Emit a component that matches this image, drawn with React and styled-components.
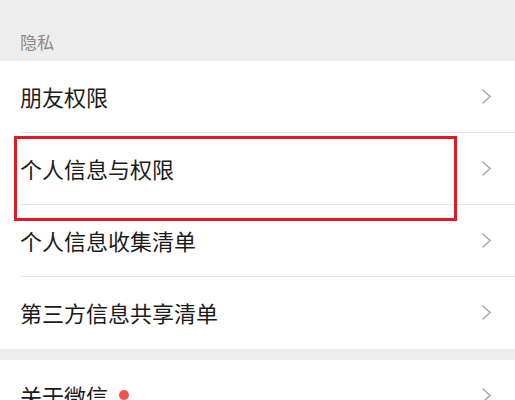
import React from 'react';
import styled, { createGlobalStyle } from 'styled-components';

const GlobalStyle = createGlobalStyle`
    html, body {
        margin:0;
        padding:0;
        background:#ededed;
    }
    body {
        font-family:"Noto Sans CJK SC", "Noto Sans", sans-serif;
        -webkit-font-smoothing:antialiased;
    }
`;

export const Page = styled.div`
    display:flex;
    flex-direction:column;
    width:515px;
    height:400px;
    overflow:hidden;
    background:#ededed;
    & > * {
        flex-shrink:0;
    }
`;

export const SectionTitle = styled.div`
    display:flex;
    align-items:flex-end;
    height:61px;
    box-sizing:border-box;
    padding:0 0 7px 20px;
    font-size:17px;
    line-height:24px;
    color:#8a8a8a;
`;

export const Group = styled.div`
    display:flex;
    flex-direction:column;
    background:#fff;
    margin-top:${p => p.$gap || 0}px;
`;

export const Row = styled.div`
    position:relative;
    display:flex;
    align-items:center;
    flex-shrink:0;
    height:72px;
    padding:0 23px 2px 20px;
    box-sizing:border-box;
    &:after {
        content:'';
        display:${p => (p.$last ? 'none' : 'block')};
        position:absolute;
        left:20px;
        right:0;
        bottom:0;
        height:1px;
        background:#e6e6e6;
    }
`;

export const Label = styled.span`
    font-size:22px;
    line-height:30px;
    color:#1b1b1b;
`;

export const Dot = styled.span`
    width:10px;
    height:10px;
    border-radius:50%;
    background:#f25151;
    margin-left:11px;
`;

export const Spacer = styled.div`
    flex:1;
`;

export const Highlight = styled.div`
    position:absolute;
    left:14px;
    top:3px;
    width:443px;
    height:85px;
    box-sizing:border-box;
    border:3px solid #df1a22;
    pointer-events:none;
    z-index:2;
`;

const Chevron = () => (
    <svg width="11" height="17" viewBox="0 0 11 17">
        <path d="M1.5 1.5 L9 8.5 L1.5 15.5" fill="none" stroke="#adadad" strokeWidth="1.7" />
    </svg>
);

const items = [
    { label: '朋友权限' },
    { label: '个人信息与权限', marked: true },
    { label: '个人信息收集清单' },
    { label: '第三方信息共享清单', last: true },
];

export default function App() {
    return (
        <Page>
            <GlobalStyle />
            <SectionTitle>隐私</SectionTitle>
            <Group>
                {items.map(item => (
                    <Row key={item.label} $last={item.last}>
                        <Label>{item.label}</Label>
                        <Spacer />
                        <Chevron />
                        {item.marked && <Highlight />}
                    </Row>
                ))}
            </Group>
            <Group $gap={11}>
                <Row $last>
                    <Label>关于微信</Label>
                    <Dot />
                    <Spacer />
                    <Chevron />
                </Row>
            </Group>
        </Page>
    );
}
